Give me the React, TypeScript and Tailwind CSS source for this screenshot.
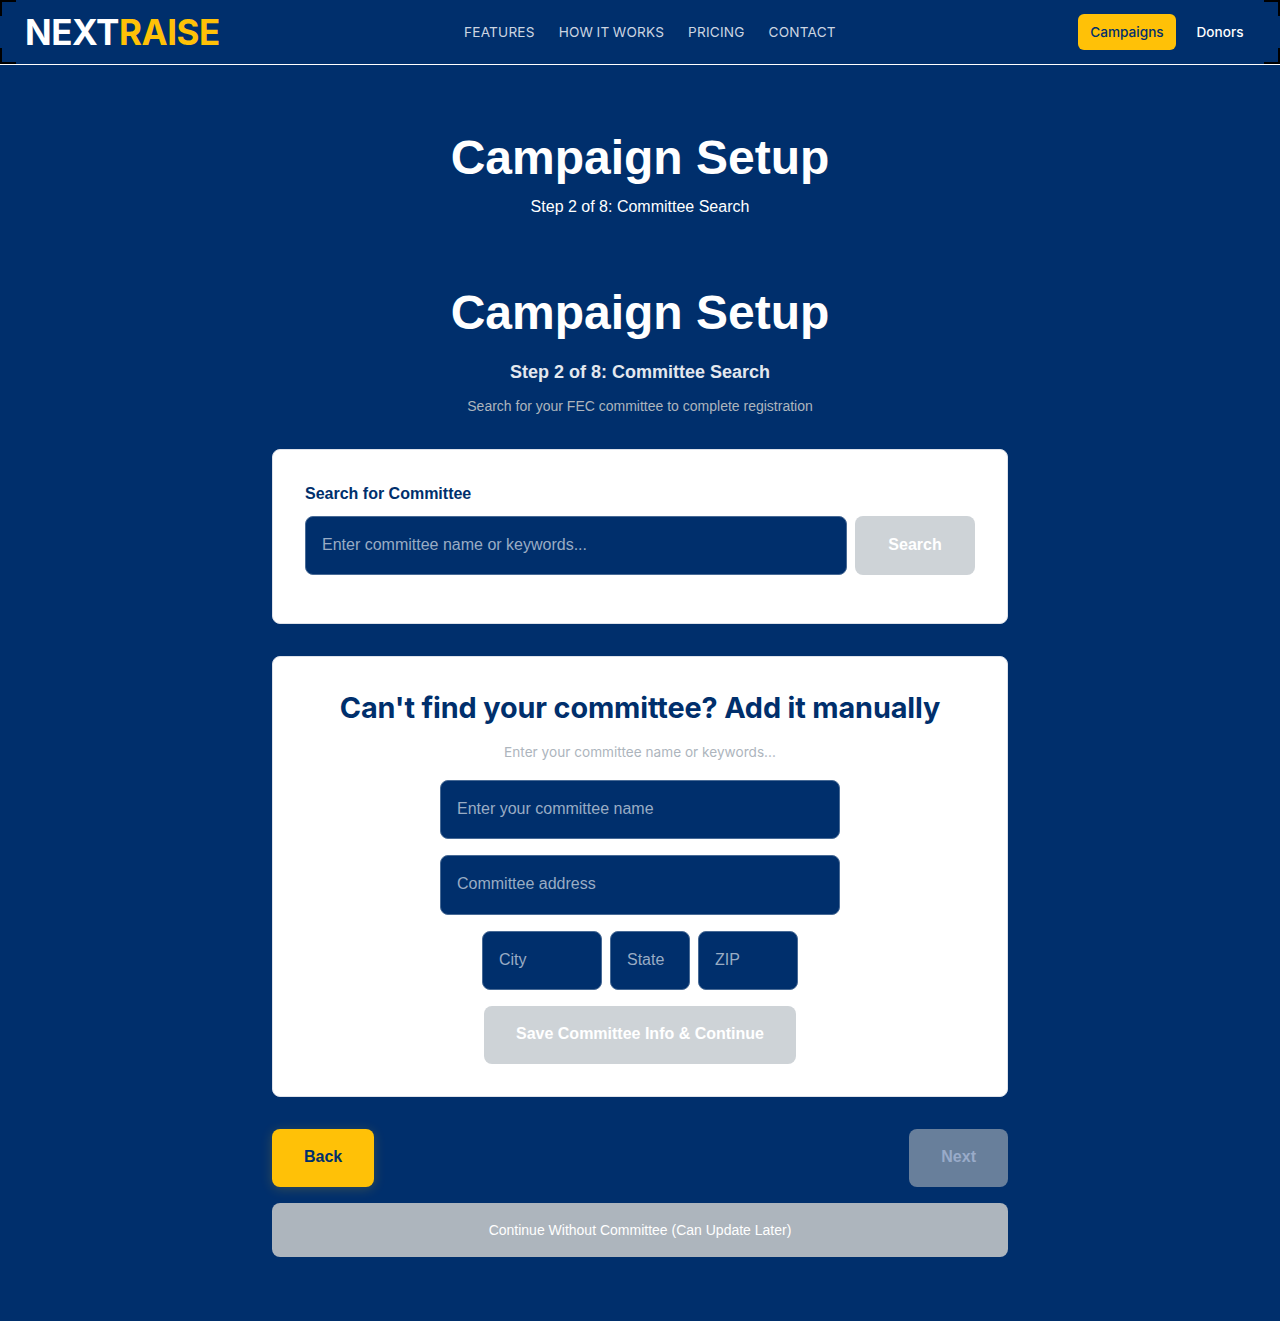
import React from 'react';

const field =
  'block h-[59.6px] min-w-0 rounded-lg border border-[#486a95] bg-[#002f6c] px-4 pt-4 pb-[17px] text-base leading-[25.6px] text-white outline-none placeholder:text-[#99acc4] placeholder:opacity-100';
const card = 'rounded-lg border border-[#dee2ea] bg-white p-8';
const button =
  'flex items-center justify-center rounded-lg px-8 pt-[15px] pb-[17px] text-base leading-[25.6px] font-bold';

function Brackets() {
  return (
    <>
      <i className="absolute top-0 left-0 size-4 border-t-2 border-l-2 border-black" />
      <i className="absolute top-0 right-0 size-4 border-t-2 border-r-2 border-black" />
      <i className="absolute bottom-0 left-0 size-4 border-b-2 border-l-2 border-black" />
      <i className="absolute right-0 bottom-0 size-4 border-r-2 border-b-2 border-black" />
    </>
  );
}

function Header() {
  return (
    <header className="relative flex h-[65px] items-center justify-between border-b border-white px-6 font-['Inter',sans-serif]">
      <Brackets />
      <div className="pl-px text-[35px] leading-[40px] font-bold tracking-[-0.45px] text-white">
        NEXT<span className="text-[#ffc107]">RAISE</span>
      </div>
      <nav className="flex gap-6 pl-0.5 text-[13.6px] leading-5 tracking-[0.2px] [word-spacing:-0.6px] text-[#ccd5e1]">
        <a>FEATURES</a>
        <a>HOW IT WORKS</a>
        <a>PRICING</a>
        <a>CONTACT</a>
      </nav>
      <div className="flex justify-end gap-2 text-[13.6px] font-medium">
        <button className="h-9 w-[98px] rounded-md bg-[#ffc107] text-[#002f6c]">Campaigns</button>
        <button className="h-9 w-[72px] rounded-md text-white">Donors</button>
      </div>
    </header>
  );
}

export default function App() {
  return (
    <div className="min-h-[1321px] bg-[#002f6c] font-['Liberation_Sans',Arial,sans-serif] text-white">
      <Header />
      <main className="mx-auto w-[736px] pt-16 pb-16">
        <div className="text-center">
          <h1 className="text-5xl leading-[57.6px] font-bold">Campaign Setup</h1>
          <p className="mt-[7px] mb-px text-base leading-[25.6px]">Step 2 of 8: Committee Search</p>
        </div>
        <div className="pt-16 text-center">
          <h1 className="text-5xl leading-[57.6px] font-bold">Campaign Setup</h1>
          <h2 className="mt-4 text-lg leading-[28.8px] font-bold text-[#e3e8ef]">Step 2 of 8: Committee Search</h2>
          <p className="mt-2 text-sm leading-[22.4px] text-[#adb5bd]">
            Search for your FEC committee to complete registration
          </p>
        </div>

        <section className={`${card} mt-8`}>
          <label className="-mt-px block text-base leading-[25.6px] font-bold text-[#002f6c]">
            Search for Committee
          </label>
          <div className="mt-[9px] mb-4 flex gap-2">
            <input className={`${field} flex-1`} placeholder="Enter committee name or keywords..." />
            <button className={`${button} w-[120px] bg-[#ced3d7] text-white`}>Search</button>
          </div>
        </section>

        <section className={`${card} mt-8 flex flex-col items-center`}>
          <h2 className="mt-px font-['Inter',sans-serif] text-[28.8px] leading-[35px] font-bold tracking-[-0.13px] text-[#002f6c]">
            Can't find your committee? Add it manually
          </h2>
          <p className="mt-4 font-['Inter',sans-serif] text-[13.6px] leading-[22.4px] tracking-[0.02px] text-[#adb5bd]">
            Enter your committee name or keywords...
          </p>
          <input className={`${field} mt-4 w-[400px]`} placeholder="Enter your committee name" />
          <input className={`${field} mt-4 w-[400px]`} placeholder="Committee address" />
          <div className="mt-4 flex gap-2">
            <input className={`${field} w-[120px]`} placeholder="City" />
            <input className={`${field} w-20`} placeholder="State" />
            <input className={`${field} w-[100px]`} placeholder="ZIP" />
          </div>
          <button className={`${button} mt-4 bg-[#ced3d7] text-white`}>Save Committee Info &amp; Continue</button>
        </section>

        <div className="mt-8 flex justify-between">
          <button className={`${button} bg-[#ffc107] text-[#002f6c] shadow-[0_2px_12px_rgba(255,193,7,0.2)]`}>
            Back
          </button>
          <button className={`${button} bg-[#687f9b] text-[#99abc9]`}>Next</button>
        </div>
        <button className="mt-4 block w-full rounded-lg bg-[#adb5bd] py-4 text-center text-sm leading-[22.4px] text-white">
          Continue Without Committee (Can Update Later)
        </button>
      </main>
    </div>
  );
}
